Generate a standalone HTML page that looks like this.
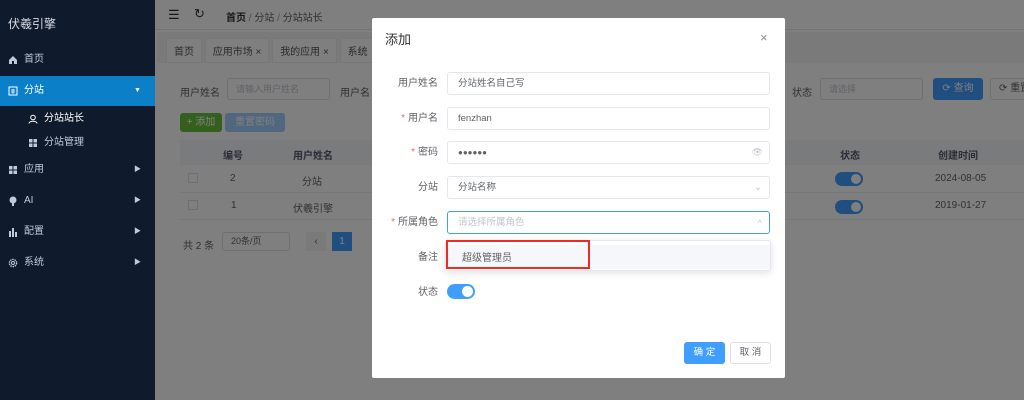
<!DOCTYPE html>
<html><head><meta charset="utf-8"><style>
*{box-sizing:border-box;margin:0;padding:0}
body{width:1024px;height:400px;overflow:hidden;position:relative;font-family:"Liberation Sans","Noto Sans CJK SC",sans-serif;font-size:10px;color:#606266;background:#f0f2f5}
.abs{position:absolute}
.side{left:0;top:0;width:155px;height:400px;background:#0f1a2c;color:#bfcbd9;z-index:5}
.side .it{position:absolute;left:0;width:155px;height:30px;line-height:30px;padding-left:24px;font-size:10px}
.side .ic{position:absolute;left:8px;top:10px;width:10px;height:10px}
.side .ar{position:absolute;left:134px;top:0;font-size:7px}
.main{left:155px;top:0;width:869px;height:400px;background:#fff}
.inp{position:absolute;border:1px solid #dcdfe6;border-radius:3px;background:#fff;color:#c0c4cc;font-size:9px;padding-left:8px}
.ov{left:155px;top:0;width:869px;height:400px;background:rgba(0,0,0,.5);z-index:3}
.modal{left:372px;top:18px;width:413px;height:360px;background:#fff;z-index:6;border-radius:2px}
.lab{position:absolute;right:347px;font-size:10px;line-height:12px;color:#606266;text-align:right;white-space:nowrap}
.lab i{color:#f56c6c;font-style:normal;margin-right:3px}
.fi{position:absolute;left:75px;width:323px;height:23px;border:1px solid #e4e7ed;border-radius:3px;padding-left:10px;line-height:21px;font-size:9.5px;color:#606266}
</style></head><body>
<div class="abs side">
<div style="position:absolute;left:8px;top:15px;font-size:12px;color:#d8dde6">伏羲引擎</div>
<div class="it" style="top:45px"><svg class="ic" viewBox="0 0 10 10"><path d="M1 5L5 1L9 5V9H6V6H4V9H1Z" fill="#bfcbd9"/></svg>首页</div>
<div class="it" style="top:76px;background:#0b7fc7;color:#fff"><svg class="ic" viewBox="0 0 10 10"><rect x="1" y="1" width="8" height="8" fill="none" stroke="#fff"/><path d="M3 4H7M3 6H7M5 3V8" stroke="#fff" stroke-width=".8"/></svg>分站<span class="ar" style="color:#fff">▼</span></div>
<div class="it" style="top:104px;padding-left:44px;color:#fff"><svg class="ic" style="left:28px" viewBox="0 0 10 10"><circle cx="5" cy="3.5" r="2.3" fill="none" stroke="#fff"/><path d="M1 9.5C1 6.5 9 6.5 9 9.5" fill="none" stroke="#fff"/></svg>分站站长</div>
<div class="it" style="top:128px;padding-left:44px"><svg class="ic" style="left:28px" viewBox="0 0 10 10"><path d="M1 1h3.5v3.5H1zM5.5 1H9v3.5H5.5zM1 5.5h3.5V9H1zM5.5 5.5H9V9H5.5z" fill="#bfcbd9"/></svg>分站管理</div>
<div class="it" style="top:155px"><svg class="ic" viewBox="0 0 10 10"><path d="M1 1h3.5v3.5H1zM5.5 1H9v3.5H5.5zM1 5.5h3.5V9H1zM5.5 5.5H9V9H5.5z" fill="#bfcbd9"/></svg>应用<span class="ar">▶</span></div>
<div class="it" style="top:186px"><svg class="ic" viewBox="0 0 10 10"><circle cx="5" cy="4" r="3.5" fill="#bfcbd9"/><rect x="4" y="7" width="2" height="3" fill="#bfcbd9"/></svg>AI<span class="ar">▶</span></div>
<div class="it" style="top:217px"><svg class="ic" viewBox="0 0 10 10"><path d="M1 4h2v6H1zM4 1h2v9H4zM7 5h2v5H7z" fill="#bfcbd9"/></svg>配置<span class="ar">▶</span></div>
<div class="it" style="top:248px"><svg class="ic" viewBox="0 0 10 10"><circle cx="5" cy="5" r="3.6" fill="none" stroke="#bfcbd9" stroke-width="1.4" stroke-dasharray="1.5 .8"/><circle cx="5" cy="5" r="1.5" fill="none" stroke="#bfcbd9"/></svg>系统<span class="ar">▶</span></div>
</div>
<div class="abs main">
<div style="position:absolute;left:0;top:0;width:869px;height:30px;background:#fff;border-bottom:1px solid #e6e6e6"></div>
<div style="position:absolute;left:13px;top:7px;font-size:13px;color:#333">☰</div>
<div style="position:absolute;left:39px;top:6px;font-size:13px;color:#333">↻</div>
<div style="position:absolute;left:71px;top:9px;font-size:10px;color:#303133"><b>首页</b> <span style="color:#999">/</span> <span style="color:#606266">分站</span> <span style="color:#999">/</span> <span style="color:#606266">分站站长</span></div>
<div style="position:absolute;left:2px;top:32px;width:867px;height:31px;background:#f5f5f5"></div>
<div style="position:absolute;left:11px;top:38px;font-size:10px;color:#555">
<span style="display:inline-block;background:#fff;padding:4px 7px;border:1px solid #eee">首页</span>
<span style="display:inline-block;background:#fff;padding:4px 7px;border:1px solid #eee">应用市场 ×</span>
<span style="display:inline-block;background:#fff;padding:4px 7px;border:1px solid #eee">我的应用 ×</span>
<span style="display:inline-block;background:#fff;padding:4px 7px;border:1px solid #eee">系统</span></div>
<div style="position:absolute;left:25px;top:84px;font-size:10px">用户姓名</div>
<div class="inp" style="left:72px;top:78px;width:103px;height:22px;line-height:20px">请输入用户姓名</div>
<div style="position:absolute;left:185px;top:84px;font-size:10px">用户名</div>
<div style="position:absolute;left:637px;top:84px;font-size:10px">状态</div>
<div class="inp" style="left:665px;top:78px;width:103px;height:22px;line-height:20px">请选择</div>
<div style="position:absolute;left:778px;top:78px;width:50px;height:22px;background:#409eff;color:#fff;text-align:center;line-height:22px;border-radius:3px">⟳ 查询</div>
<div style="position:absolute;left:835px;top:78px;width:50px;height:22px;border:1px solid #dcdfe6;background:#fff;line-height:20px;padding-left:8px;border-radius:3px">⟳ 重置</div>
<div style="position:absolute;left:25px;top:113px;width:42px;height:19px;background:#67c23a;color:#fff;line-height:19px;text-align:center;border-radius:3px">+ 添加</div>
<div style="position:absolute;left:70px;top:113px;width:60px;height:19px;background:#a0cfff;color:#fff;line-height:19px;text-align:center;border-radius:3px">重置密码</div>
<div style="position:absolute;left:25px;top:140px;width:844px;height:25px;background:#f5f7fa"></div>
<div style="position:absolute;left:68px;top:147px;font-weight:bold;color:#515a6e">编号</div>
<div style="position:absolute;left:138px;top:147px;font-weight:bold;color:#515a6e">用户姓名</div>
<div style="position:absolute;left:685px;top:147px;font-weight:bold;color:#515a6e">状态</div>
<div style="position:absolute;left:783px;top:147px;font-weight:bold;color:#515a6e">创建时间</div>
<div style="position:absolute;left:25px;top:192px;width:844px;height:1px;background:#ebeef5"></div>
<div style="position:absolute;left:25px;top:219px;width:844px;height:1px;background:#ebeef5"></div>
<div style="position:absolute;left:33px;top:173px;width:10px;height:10px;border:1px solid #dcdfe6"></div>
<div style="position:absolute;left:33px;top:200px;width:10px;height:10px;border:1px solid #dcdfe6"></div>
<div style="position:absolute;left:75px;top:173px">2</div><div style="position:absolute;left:147px;top:173px">分站</div>
<div style="position:absolute;left:76px;top:200px">1</div><div style="position:absolute;left:138px;top:200px">伏羲引擎</div>
<div style="position:absolute;left:680px;top:172px;width:28px;height:14px;background:#409eff;border-radius:7px"><div style="position:absolute;right:2px;top:2px;width:10px;height:10px;background:#fff;border-radius:50%"></div></div>
<div style="position:absolute;left:680px;top:200px;width:28px;height:14px;background:#409eff;border-radius:7px"><div style="position:absolute;right:2px;top:2px;width:10px;height:10px;background:#fff;border-radius:50%"></div></div>
<div style="position:absolute;left:780px;top:173px">2024-08-05</div><div style="position:absolute;left:780px;top:200px">2019-01-27</div>
<div style="position:absolute;left:28px;top:237px">共 2 条</div>
<div class="inp" style="left:67px;top:232px;width:68px;height:19px;line-height:17px;color:#606266">20条/页</div>
<div style="position:absolute;left:151px;top:232px;width:20px;height:19px;background:#f4f4f5;text-align:center;line-height:19px">‹</div>
<div style="position:absolute;left:177px;top:232px;width:20px;height:19px;background:#409eff;color:#fff;text-align:center;line-height:19px">1</div>
</div>
<div class="abs ov"></div>
<div class="abs modal">
<div style="position:absolute;left:13px;top:11px;font-size:13px;color:#303133">添加</div>
<div style="position:absolute;left:388px;top:12px;font-size:13px;color:#909399">×</div>
<div class="lab" style="top:60px">用户姓名</div><div class="fi" style="top:54px">分站姓名自己写</div>
<div class="lab" style="top:95px"><i>*</i>用户名</div><div class="fi" style="top:89px">fenzhan</div>
<div class="lab" style="top:129px"><i>*</i>密码</div><div class="fi" style="top:123px;font-size:8px;letter-spacing:0">●●●●●●<span style="position:absolute;right:6px;color:#c0c4cc;font-size:9px">👁</span></div>
<div class="lab" style="top:164px">分站</div><div class="fi" style="top:158px">分站名称<span style="position:absolute;right:7px;color:#c0c4cc">⌄</span></div>
<div class="lab" style="top:199px"><i>*</i>所属角色</div><div class="fi" style="top:193px;border-color:#409eff;color:#c0c4cc">请选择所属角色<span style="position:absolute;right:7px;top:1px;color:#c0c4cc;font-size:9px">^</span></div>
<div class="lab" style="top:234px">备注</div>
<div class="lab" style="top:269px">状态</div>
<div style="position:absolute;left:75px;top:266px;width:28px;height:15px;background:#409eff;border-radius:8px"><div style="position:absolute;right:2px;top:2px;width:11px;height:11px;background:#fff;border-radius:50%"></div></div>
<div style="position:absolute;left:73px;top:222px;width:326px;height:31px;background:#fff;box-shadow:0 2px 8px rgba(0,0,0,.12);border:1px solid #e4e7ed;border-radius:3px"><div style="position:absolute;left:0;top:4px;width:324px;height:24px;background:#f5f7fa"></div></div>
<div style="position:absolute;left:74px;top:222px;width:144px;height:29px;border:2px solid #f02a25"></div>
<div style="position:absolute;left:90px;top:231px;font-size:10px;color:#606266">超级管理员</div>
<div style="position:absolute;left:312px;top:324px;width:41px;height:22px;background:#409eff;color:#fff;text-align:center;line-height:22px;border-radius:3px;font-size:9.5px">确 定</div>
<div style="position:absolute;left:358px;top:324px;width:41px;height:22px;border:1px solid #dcdfe6;text-align:center;line-height:20px;border-radius:3px;font-size:9.5px">取 消</div>
</div>
</body></html>
